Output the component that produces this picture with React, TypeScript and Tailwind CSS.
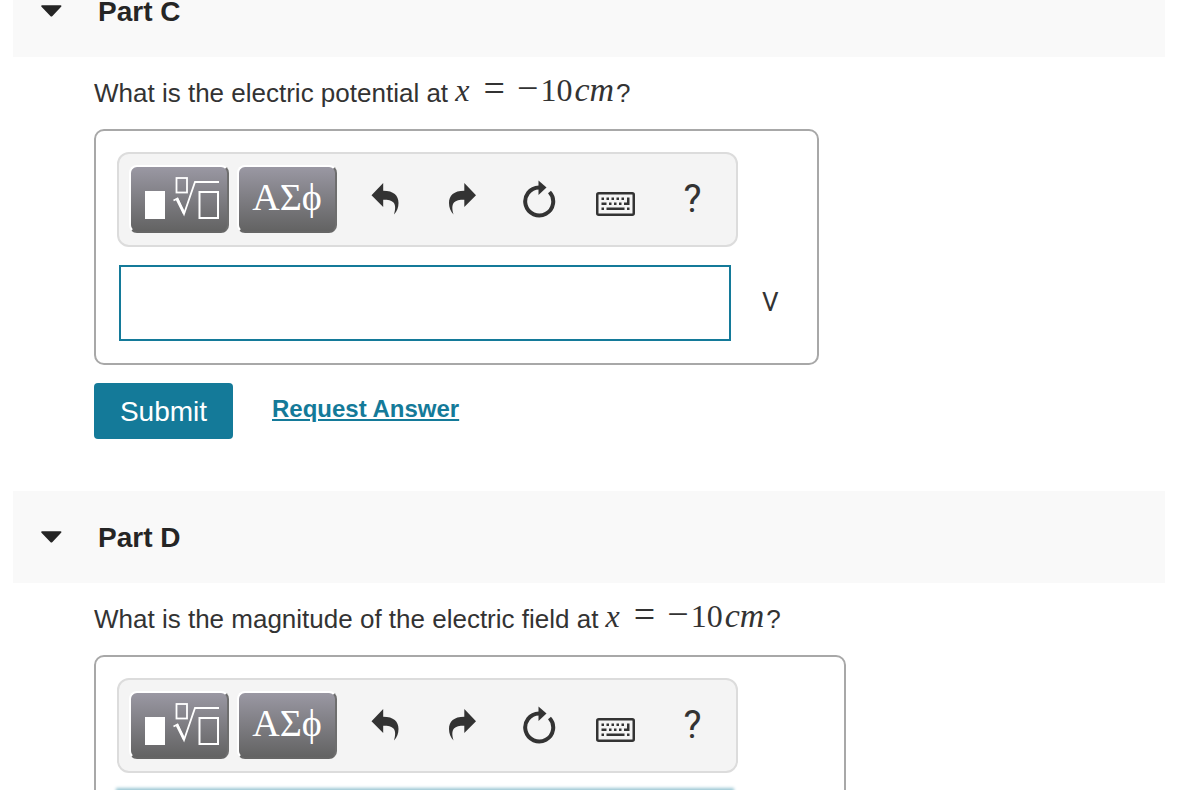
import type { ReactNode } from 'react';

function Caret() {
  return (
    <svg width="21" height="12" viewBox="0 0 22 12" aria-hidden="true" fill="#252525">
      <path d="M1.2 0h19.2c1 0 1.4.9.7 1.6L12 11.2c-.7.7-1.5.7-2.2 0L.5 1.6C-.2.9.2 0 1.2 0Z" />
    </svg>
  );
}

function TemplateIcon() {
  return (
    <svg width="76" height="46" viewBox="0 0 76 46" aria-hidden="true" fill="none" stroke="#fff">
      <rect x="2" y="15" width="20" height="28" fill="#fff" stroke="none" />
      <rect x="33.5" y="2" width="10.5" height="14.5" strokeWidth="1.8" />
      <path d="M30.5 24.5l4-2 6.5 15.5L52 6h24" strokeWidth="1.8" />
      <path d="M34 23l7 14" strokeWidth="2.8" />
      <rect x="56.5" y="16" width="18.5" height="26" strokeWidth="2" />
    </svg>
  );
}

function UndoIcon() {
  return (
    <svg width="28" height="32" viewBox="0 0 28 32" aria-hidden="true" fill="#333">
      <path d="M.5 12.2 12.200 0v7.800c10.500 0 15.300 4.700 15.300 12.200 0 4.500-1.500 8.500-4.500 11.500 1.500-5.500 1.700-9.500-.5-12-2-2.300-5.300-2.800-10.300-2.800V24Z" />
    </svg>
  );
}

function RedoIcon() {
  return (
    <svg width="28" height="32" viewBox="0 0 28 32" aria-hidden="true" fill="#333">
      <path d="M28 12.200 16.300 0v7.800C5.800 7.800 1 12.500 1 20c0 4.500 1.500 8.500 4.500 11.500-1.500-5.500-1.700-9.500.5-12 2-2.300 5.300-2.800 10.300-2.800V24Z" />
    </svg>
  );
}

function ResetIcon() {
  return (
    <svg width="34" height="38" viewBox="0 0 34 38" aria-hidden="true">
      <path d="M17 7.500A14 14 0 1 0 27.500 12" fill="none" stroke="#333" strokeWidth="4" />
      <path d="M16.500 .5 24.500 7.500 16.500 15Z" fill="#333" />
    </svg>
  );
}

function KeyboardIcon() {
  return (
    <svg width="39" height="24" viewBox="0 0 39 24" aria-hidden="true">
      <rect x="1.250" y="1.250" width="36.500" height="21.500" rx="1.500" fill="none" stroke="#333" strokeWidth="2.500" />
      <path
        fill="#333"
        d="M5.500 5.500h2.500v2.500h-2.500zM10.500 5.500h2.500v2.500h-2.500zM15.500 5.500h2.500v2.500h-2.500zM20.500 5.500h2.500v2.500h-2.500zM25.500 5.500h2.500v2.500h-2.500zM31 5.500h2.500v7.500h-5.500v-2.500h3zM5.500 10.500h5v2.500h-5zM13 10.500h2.500v2.500h-2.500zM18 10.500h2.500v2.500h-2.500zM23 10.500h2.500v2.500h-2.500zM5.500 15.500h2.500v2.500h-2.500zM10.500 15.500h18v2.500h-18zM31 15.500h2.500v2.500h-2.500z"
      />
    </svg>
  );
}

function PaletteButton({ label, children }: { label: string; children: ReactNode }) {
  return (
    <button
      type="button"
      aria-label={label}
      className="flex h-[68px] w-[100px] items-center justify-center rounded-lg border-2 border-t-white border-r-[#6e6e6e] border-b-[#666] border-l-white bg-linear-to-b from-[#9a98a3] to-[#636363] text-white"
    >
      {children}
    </button>
  );
}

function ToolButton({ label, low, children }: { label: string; low?: boolean; children: ReactNode }) {
  return (
    <button
      type="button"
      aria-label={label}
      className={`flex h-[68px] w-[77px] items-center justify-center text-[#333] ${low ? 'pt-2.5' : ''}`}
    >
      {children}
    </button>
  );
}

function Toolbar() {
  return (
    <div className="flex w-[621px] rounded-xl border-2 border-[#dcdcdc] bg-[#f4f4f4] pt-[11px] pb-3 pl-2.5">
      <div className="flex gap-2">
        <PaletteButton label="Templates">
          <span className="pl-1">
            <TemplateIcon />
          </span>
        </PaletteButton>
        <PaletteButton label="Symbols">
          <span className="pb-1 font-['Liberation_Serif',serif] text-[38px] leading-10">ΑΣϕ</span>
        </PaletteButton>
      </div>
      <div className="ml-[9px] flex">
        <ToolButton label="Undo">
          <UndoIcon />
        </ToolButton>
        <ToolButton label="Redo">
          <RedoIcon />
        </ToolButton>
        <ToolButton label="Reset">
          <ResetIcon />
        </ToolButton>
        <ToolButton label="Keyboard shortcuts" low>
          <KeyboardIcon />
        </ToolButton>
        <ToolButton label="Help">
          <span className="font-['Roboto',sans-serif] text-[38px] leading-10">?</span>
        </ToolButton>
      </div>
    </div>
  );
}

function Position() {
  return (
    <span className="mr-0.5 align-[1px] font-['Liberation_Serif',serif] text-[32px] leading-none">
      <i>x</i>
      <span className="ml-3.5 text-[38px] leading-none">=</span>
      <span className="ml-3 text-[38px] leading-none">−</span>
      <span className="ml-0.5">10</span>
      <i className="ml-0.5 text-[34px] leading-none">cm</i>
    </span>
  );
}

function PartHeader({ title }: { title: string }) {
  return (
    <h2 className="bg-[#f9f9f9] text-[#252525]">
      <button type="button" aria-expanded="true" className="flex h-[92px] w-full items-center pl-7">
        <Caret />
        <span className="ml-9 pt-0.5 font-bold text-[28px] leading-8">{title}</span>
      </button>
    </h2>
  );
}

type PartProps = {
  id: string;
  title: string;
  question: string;
  unit?: string;
  focused?: boolean;
};

function Part({ id, title, question, unit, focused }: PartProps) {
  return (
    <section>
      <PartHeader title={title} />
      <div className="pt-3 pr-4 pb-[52px] pl-[81px]">
        <label htmlFor={id} className="block h-15 text-[26px] leading-10">
          {question} <Position />?
        </label>
        <div className={`max-w-full rounded-[10px] border-2 border-[#a8a8a8] pt-[21px] pr-5 pb-[22px] pl-[21px] ${focused ? 'w-[752px]' : 'w-[725px]'}`}>
          <Toolbar />
          <div className="mt-[18px] flex items-center">
            <input
              id={id}
              type="text"
              className={`ml-0.5 h-[76px] w-[612px] border-2 border-[#147a99] bg-white px-4 text-[28px] outline-none ${focused ? 'shadow-[0_0_3px_3px_#9cc7d4]' : ''}`}
            />
            {unit && <span className="ml-[31px] pb-0.5 font-['Roboto',sans-serif] text-[26px]">{unit}</span>}
          </div>
        </div>
        {unit && (
          <div className="mt-[18px] flex items-center">
            <button type="button" className="h-14 w-[139px] rounded bg-[#147a99] pt-0.5 text-[28px] text-white">
              Submit
            </button>
            <a href="#answer" className="mb-1 ml-[39px] text-2xl font-bold text-[#147a99] underline">
              Request Answer
            </a>
          </div>
        )}
      </div>
    </section>
  );
}

export default function App() {
  return (
    <main className="h-screen overflow-hidden bg-white px-[13px] font-['Liberation_Sans',sans-serif] text-[#333]">
      <div className="-mt-[35px]">
        <Part id="part-c" title="Part C" question="What is the electric potential at" unit="V" />
        <Part id="part-d" title="Part D" question="What is the magnitude of the electric field at" focused />
      </div>
    </main>
  );
}
